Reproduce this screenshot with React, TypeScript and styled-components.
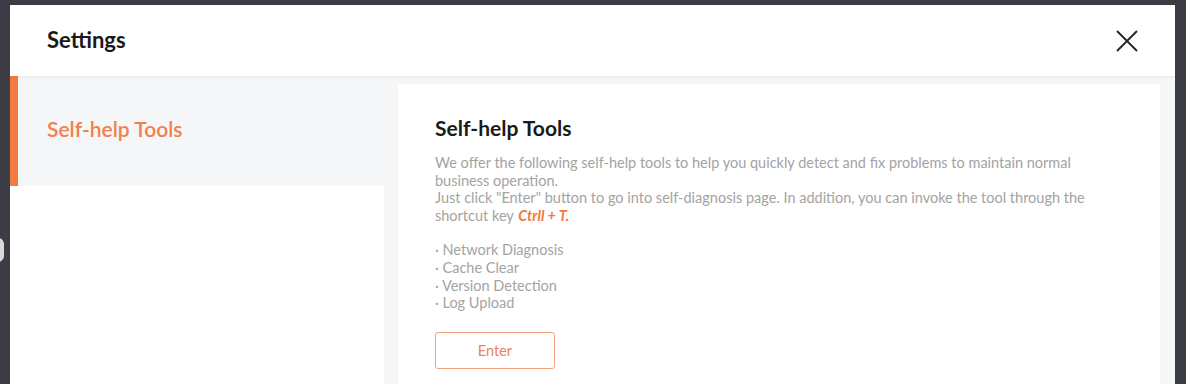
import * as React from 'react'
import styled, { createGlobalStyle } from 'styled-components'

const GlobalStyle = createGlobalStyle`
  html, body {
    margin: 0;
    padding: 0;
    background: #3c3c44;
    font-family: Lato, "Open Sans", sans-serif;
  }
`

const Backdrop = styled.div`
  width: 1186px;
  height: 384px;
  box-sizing: border-box;
  padding: 5px 11px 0 10px;
  overflow: hidden;
  position: relative;
`

const Knob = styled.div`
  position: absolute;
  left: -8px;
  top: 238px;
  width: 12px;
  height: 24px;
  border-radius: 12px;
  background: #d8d8dc;
`

const Dialog = styled.div`
  background: #f5f6f8;
  height: 100%;
  display: flex;
  flex-direction: column;
`

const Header = styled.div`
  height: 71px;
  flex-shrink: 0;
  background: #fff;
  display: flex;
  align-items: center;
  justify-content: space-between;
  padding: 0 36px 0 37px;
  box-shadow: 0 1px 3px rgba(0, 0, 0, 0.05);
  position: relative;
  z-index: 1;
`

const Title = styled.h1`
  margin: 0;
  font-size: 22px;
  font-weight: 700;
  color: #1a1a1a;
  padding-bottom: 3px;
`

const CloseButton = styled.button`
  background: none;
  border: none;
  padding: 0;
  width: 24px;
  height: 24px;
  cursor: pointer;
  display: flex;
  align-items: center;
  justify-content: center;
`

const Body = styled.div`
  flex: 1;
  display: flex;
  min-height: 0;
`

const Sidebar = styled.div`
  width: 388px;
  flex-shrink: 0;
  display: flex;
  flex-direction: column;
`

const NavItem = styled.div<{ $active?: boolean }>`
  height: 110px;
  display: flex;
  align-items: center;
  font-size: 21px;
  font-weight: 600;
  color: ${p => (p.$active ? '#f2804a' : '#333')};
  border-left: 8px solid ${p => (p.$active ? '#f47a42' : 'transparent')};
  box-sizing: border-box;
  padding-left: 29px;
  padding-bottom: 5px;
`

const SideBlank = styled.div`
  flex: 1;
  background: #fff;
  margin-right: 14px;
`

const Content = styled.div`
  flex: 1;
  background: #fff;
  margin: 8px 15px 0 0;
  padding: 31px 37px 0 37px;
`

const SectionTitle = styled.h2`
  margin: 0 0 14px;
  font-size: 21px;
  font-weight: 700;
  color: #1a1a1a;
`

const Text = styled.p`
  margin: 0;
  font-size: 14.5px;
  line-height: 17.6px;
  color: #a3a3a3;
  max-width: 670px;
`

const Hotkey = styled.em`
  color: #f07a3e;
  font-weight: 700;
  margin-left: 1px;
`

const ToolList = styled.ul`
  list-style: none;
  margin: 17px 0 0;
  padding: 0;
  font-size: 14.5px;
  line-height: 17.6px;
  color: #a3a3a3;
`

const EnterButton = styled.button`
  margin-top: 20px;
  width: 120px;
  height: 37px;
  border: 1px solid #f0a17b;
  border-radius: 3px;
  background: #fff;
  color: #e88556;
  font-family: inherit;
  font-size: 14.5px;
  cursor: pointer;
`

const tools = ['Network Diagnosis', 'Cache Clear', 'Version Detection', 'Log Upload']

export default function App() {
  return (
    <Backdrop>
      <GlobalStyle />
      <Knob />
      <Dialog>
        <Header>
          <Title>Settings</Title>
          <CloseButton aria-label="close">
            <svg width="22" height="22" viewBox="0 0 22 22">
              <path d="M1 1L21 21M21 1L1 21" stroke="#222" strokeWidth="1.8" />
            </svg>
          </CloseButton>
        </Header>
        <Body>
          <Sidebar>
            <NavItem $active>Self-help Tools</NavItem>
            <SideBlank />
          </Sidebar>
          <Content>
            <SectionTitle>Self-help Tools</SectionTitle>
            <Text>
              We offer the following self-help tools to help you quickly detect and fix problems to maintain normal business operation.
              <br />
              Just click "Enter" button to go into self-diagnosis page. In addition, you can invoke the tool through the shortcut key <Hotkey>Ctrll + T.</Hotkey>
            </Text>
            <ToolList>
              {tools.map(t => <li key={t}>· {t}</li>)}
            </ToolList>
            <EnterButton>Enter</EnterButton>
          </Content>
        </Body>
      </Dialog>
    </Backdrop>
  )
}
